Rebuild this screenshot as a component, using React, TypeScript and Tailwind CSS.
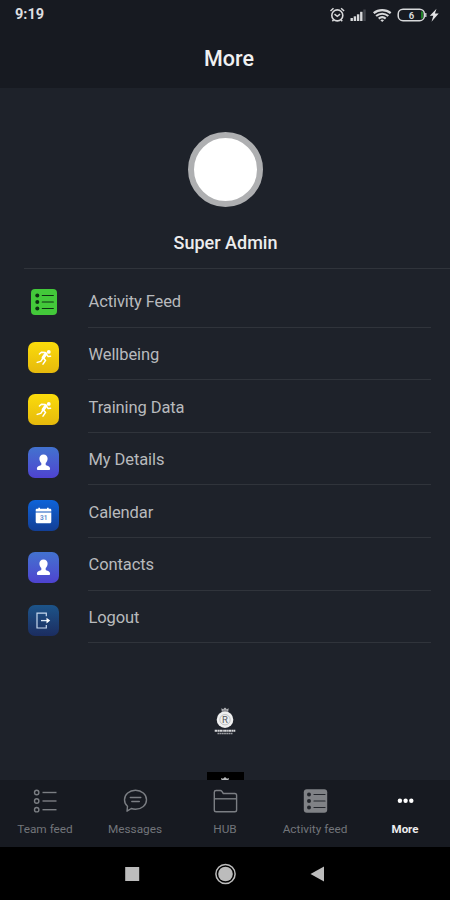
import React from "react";

const ListGlyph = ({ dot }: { dot: string }) => (
  <g>
    {[6.5, 13, 19.5].map((y) => (
      <g key={y}>
        <circle cx="6.3" cy={y} r="2" fill={dot} />
        <path d={`M11.3 ${y}h11`} stroke={dot} strokeWidth="1.2" strokeLinecap="round" />
      </g>
    ))}
  </g>
);

const Tile = ({ className, children }: { className: string; children: React.ReactNode }) => (
  <div className={`flex h-[31px] w-[31px] items-center justify-center rounded-[7px] ${className}`}>
    <svg width="31" height="31" viewBox="0 0 31 31" fill="none">
      {children}
    </svg>
  </div>
);

const FeedIcon = () => (
  <div className="h-[26px] w-[26px] rounded-[4px] bg-[#43c93a]">
    <svg width="26" height="26" viewBox="0 0 26 26">
      <ListGlyph dot="#0d3012" />
    </svg>
  </div>
);

const Runner = () => (
  <Tile className="bg-gradient-to-b from-[#fbdc0b] to-[#e6b90c]">
    <circle cx="20.8" cy="9.9" r="1.9" fill="#fff" />
    <path d="M17.8 11.8L15.2 15.600" stroke="#fff" strokeWidth="3.2" strokeLinecap="round" />
    <path
      d="M17.2 10.400L13.4 10.200 11.4 12M18.8 12.600L20.2 14.600 22.600 14.200M15.6 16.200L17.6 18.400 15 22.200M14.600 16.600L12.8 19.400 9.200 20.400"
      stroke="#fff"
      strokeWidth="1.500"
      strokeLinecap="round"
      strokeLinejoin="round"
    />
  </Tile>
);

const Person = () => (
  <Tile className="bg-gradient-to-b from-[#4272cf] to-[#4e42d0]">
    <path
      d="M15.500 7.500c2.600 0 4.100 1.700 4.100 4 0 1.900-.8 3.600-1.900 4.500v1.900c.8.900 4.400.8 4.400 3.800 0 .9-.5 1.400-1.300 1.400H10.200c-.8 0-1.300-.5-1.300-1.400 0-3 3.600-2.900 4.400-3.800v-1.900c-1.100-.9-1.900-2.600-1.900-4.500 0-2.300 1.500-4 4.100-4z"
      fill="#fff"
    />
  </Tile>
);

const CalendarIcon = () => (
  <Tile className="bg-gradient-to-b from-[#0d63d8] to-[#123f96]">
    <path
      d="M9 8.800h1.300V7.800h1.700v1h7V7.800h1.700v1H22c.8 0 1.300.5 1.300 1.300v1.500H7.700v-1.500c0-.8.500-1.300 1.300-1.300zM7.700 12.500h15.600v9.200c0 .9-.6 1.500-1.500 1.500H9.200c-.9 0-1.500-.6-1.500-1.500z"
      fill="#fff"
    />
    <text x="15.700" y="20.300" textAnchor="middle" fontSize="6.500" fontWeight="700" fontFamily="Roboto, sans-serif" fill="#6790cf">
      31
    </text>
  </Tile>
);

const LogoutIcon = () => (
  <Tile className="bg-gradient-to-b from-[#1c5489] to-[#1b2d60]">
    <path d="M18.300 11.300V8.200H9v14.800h9.300v-3.100" stroke="#c8d9ef" strokeWidth="1.200" />
    <path d="M13 15.600h6.500" stroke="#dce8f7" strokeWidth="1.300" />
    <path d="M18.500 12.700l3.700 2.900-3.700 2.900z" fill="#fff" />
  </Tile>
);

const rows = [
  { label: "Activity Feed", icon: <FeedIcon />, shift: "pt-[2px]" },
  { label: "Wellbeing", icon: <Runner />, shift: "pt-[7px]" },
  { label: "Training Data", icon: <Runner />, shift: "pt-[7px]" },
  { label: "My Details", icon: <Person />, shift: "pt-[7px]" },
  { label: "Calendar", icon: <CalendarIcon />, shift: "pt-[7px]" },
  { label: "Contacts", icon: <Person />, shift: "pt-[7px]" },
  { label: "Logout", icon: <LogoutIcon />, shift: "pt-[7px]" },
];

const StatusIcons = () => (
  <svg width="112" height="20" viewBox="0 0 112 20" fill="none" stroke="#d8d9db">
    <circle cx="9.300" cy="10.400" r="5.500" strokeWidth="1.600" />
    <path d="M2.500 6l3-2.700M16.100 6l-3-2.700M6.500 9.200l2.800 2.100 2.800-2.100M5.600 14.700l-1.200 1.500M13 14.700l1.200 1.500" strokeWidth="1.500" />
    <g stroke="none" fill="#d8d9db">
      <rect x="22.500" y="13" width="2.400" height="3" />
      <rect x="25.700" y="11.300" width="2.400" height="4.700" />
      <rect x="28.900" y="9.300" width="2.400" height="6.700" />
      <rect x="32.100" y="6.800" width="2.400" height="9.200" />
      <rect x="35.300" y="4.500" width="2.400" height="11.500" fill="#42454c" />
    </g>
    <path d="M45.700 8.100c4.900-4.100 12.100-4.100 17 0" strokeWidth="2.200" />
    <path d="M48.100 11c3.600-3 8.600-3 12.200 0" strokeWidth="2.200" />
    <path d="M50.700 13.600c2.100-1.700 4.900-1.700 7 0" strokeWidth="2.200" />
    <path d="M52.400 15.200c1.100-.8 2.500-.8 3.600 0L54.200 17z" fill="#d8d9db" stroke="none" />
    <rect x="70.200" y="4.200" width="26.200" height="11.500" rx="4.800" strokeWidth="1.500" />
    <path d="M97.800 8v4" strokeWidth="1.300" />
    <path d="M94 6.500v7" stroke="#26a52b" strokeWidth="1.500" />
    <text x="83.500" y="13.500" textAnchor="middle" fontSize="9.500" fontWeight="700" fontFamily="Roboto, sans-serif" fill="#d8d9db" stroke="none">
      6
    </text>
    <path d="M108.500 3.800l-6.700 7h3.500l-1.800 6 7.200-8.200h-3.800z" fill="#e5e5e7" stroke="none" />
  </svg>
);

const Crest = () => (
  <svg width="24" height="29" viewBox="0 0 24 29" fill="none">
    <path d="M8.300 1.200l1.900 1L12 .5l1.800 1.700 1.900-1-.7 4.300H9z" fill="#b9bbbe" />
    <path d="M8.700 4.700h6.600M9.500 3.200h5" stroke="#4b4e54" strokeWidth=".6" />
    <circle cx="12" cy="12.700" r="8.300" fill="#eeefef" />
    <circle cx="12" cy="12.700" r="5.200" stroke="#9fa2a5" strokeWidth=".6" />
    <text x="12" y="16" textAnchor="middle" fontSize="9.500" fontFamily="Roboto, sans-serif" fill="#555a60">
      R
    </text>
    <path d="M1.700 23.700h20.600" stroke="#d7d8da" strokeWidth="1.900" strokeDasharray="2.600 .4 1.400 .3" />
    <path d="M4.500 26.500h15" stroke="#9b9da1" strokeWidth="1.400" strokeDasharray="1.800 .4" />
  </svg>
);

const tabs = [
  {
    label: "Team feed",
    icon: (
      <svg width="26" height="26" viewBox="0 0 26 26" fill="none" stroke="#7b7e83" strokeWidth="1.400">
        {[4.500, 13, 21.700].map((y) => (
          <g key={y}>
            <circle cx="4.700" cy={y} r="2.200" />
            <path d={`M10.500 ${y}h14`} />
          </g>
        ))}
      </svg>
    ),
  },
  {
    label: "Messages",
    icon: (
      <svg width="26" height="26" viewBox="0 0 26 26" fill="none" stroke="#7b7e83" strokeWidth="1.400" strokeLinejoin="round" strokeLinecap="round">
        <path d="M13.500 2.200c6.200 0 11 4.200 11 9.500s-4.800 9.500-11 9.500c-1.500 0-2.900-.2-4.200-.7L5 23.200l.5-4.900c-1.900-1.700-3-4-3-6.600 0-5.300 4.800-9.500 11-9.500z" />
        <path d="M8.300 9.500h10.500M9.800 13.500h7.500" />
      </svg>
    ),
  },
  {
    label: "HUB",
    icon: (
      <svg width="26" height="26" viewBox="0 0 26 26" fill="none" stroke="#7b7e83" strokeWidth="1.400" strokeLinejoin="round">
        <path d="M2.300 22V4.200c0-1 .8-1.700 1.800-1.700h4.200c.7 0 1.200.3 1.600.9l1.400 2.100h11.500c1 0 1.800.8 1.800 1.800V22c0 1-.8 1.800-1.800 1.800H4.100c-1 0-1.800-.8-1.800-1.800z" />
        <path d="M2.300 10.800h22.300" />
      </svg>
    ),
  },
  {
    label: "Activity feed",
    icon: (
      <svg width="26" height="26" viewBox="0 0 26 26">
        <rect x="1.800" y="1.300" width="23.400" height="23.400" rx="3" fill="#808286" />
        <g transform="translate(0.700 0)">
          <ListGlyph dot="#23262c" />
        </g>
      </svg>
    ),
  },
  {
    label: "More",
    icon: (
      <svg width="26" height="26" viewBox="0 0 26 26" fill="#fff">
        <circle cx="7.900" cy="12.800" r="2.200" />
        <circle cx="13.600" cy="12.800" r="2.200" />
        <circle cx="19.300" cy="12.800" r="2.200" />
      </svg>
    ),
  },
];

export default function App() {
  return (
    <div className="flex h-[900px] w-[450px] flex-col overflow-hidden bg-[#1e222a] font-[Roboto,sans-serif]">
      <header className="h-[88px] bg-[#171a21]">
        <div className="flex h-[29px] items-center justify-between pr-[10px] pl-[15px]">
          <span className="pt-px text-[14.500px] font-bold text-[#dddee0]">9:19</span>
          <StatusIcons />
        </div>
        <h1 className="flex h-[59px] items-center justify-center pt-px pl-2 text-[21.500px] font-medium text-[#f0f0f1]">More</h1>
      </header>

      <main className="flex h-[692px] flex-col overflow-hidden">
        <section className="ml-6 flex h-[181px] shrink-0 flex-col items-center border-b border-[#30343b] pt-[44px] pr-[23px]">
          <div className="h-[75px] w-[75px] rounded-full border-[6px] border-[#aeafb1] bg-white" />
          <p className="mt-6 text-[18px] leading-6 font-medium text-[#ececed]">Super Admin</p>
        </section>
        <ul className="mt-[6px] shrink-0">
          {rows.map((row) => (
            <li key={row.label} className="flex h-[52.600px] pr-[19px]">
              <div className={`flex w-[88px] shrink-0 items-center justify-center pr-px ${row.shift}`}>{row.icon}</div>
              <div className="flex flex-1 items-center border-b border-[#30343b] pt-[4px] pl-[0.500px] text-[16.500px] tracking-[-0.1px] text-[#b8babd]">
                {row.label}
              </div>
            </li>
          ))}
        </ul>
        <div className="mt-[64px] flex shrink-0 flex-col items-center">
          <Crest />
          <div className="mt-[36px] flex h-8 w-[37px] justify-center bg-black">
            <svg width="12" height="8" viewBox="0 0 12 8" fill="#b8babc">
              <path d="M2 6l2 .8L6 5l2 1.800L10 6 9.500 8h-7z" />
            </svg>
          </div>
        </div>
      </main>

      <nav className="grid h-[67px] shrink-0 grid-cols-5 bg-[#171a21]">
        {tabs.map((tab) => (
          <div key={tab.label} className="flex flex-col items-center pt-2">
            {tab.icon}
            <span
              className={`mt-[7px] leading-4 ${
                tab.label === "More" ? "text-[11.500px] font-bold text-[#eeeeef]" : "text-[11.800px] text-[#72757a]"
              }`}
            >
              {tab.label}
            </span>
          </div>
        ))}
      </nav>

      <footer className="flex h-[53px] shrink-0 items-center justify-center bg-black">
        <svg width="210" height="24" viewBox="0 0 210 24">
          <rect x="5.200" y="5" width="14" height="14" fill="#bcbcbc" />
          <circle cx="105.500" cy="12" r="9.600" fill="none" stroke="#bcbcbc" strokeWidth="1.500" />
          <circle cx="105.500" cy="12" r="7.300" fill="#bcbcbc" />
          <path d="M204 4.500v15L190.500 12z" fill="#bcbcbc" />
        </svg>
      </footer>
    </div>
  );
}
